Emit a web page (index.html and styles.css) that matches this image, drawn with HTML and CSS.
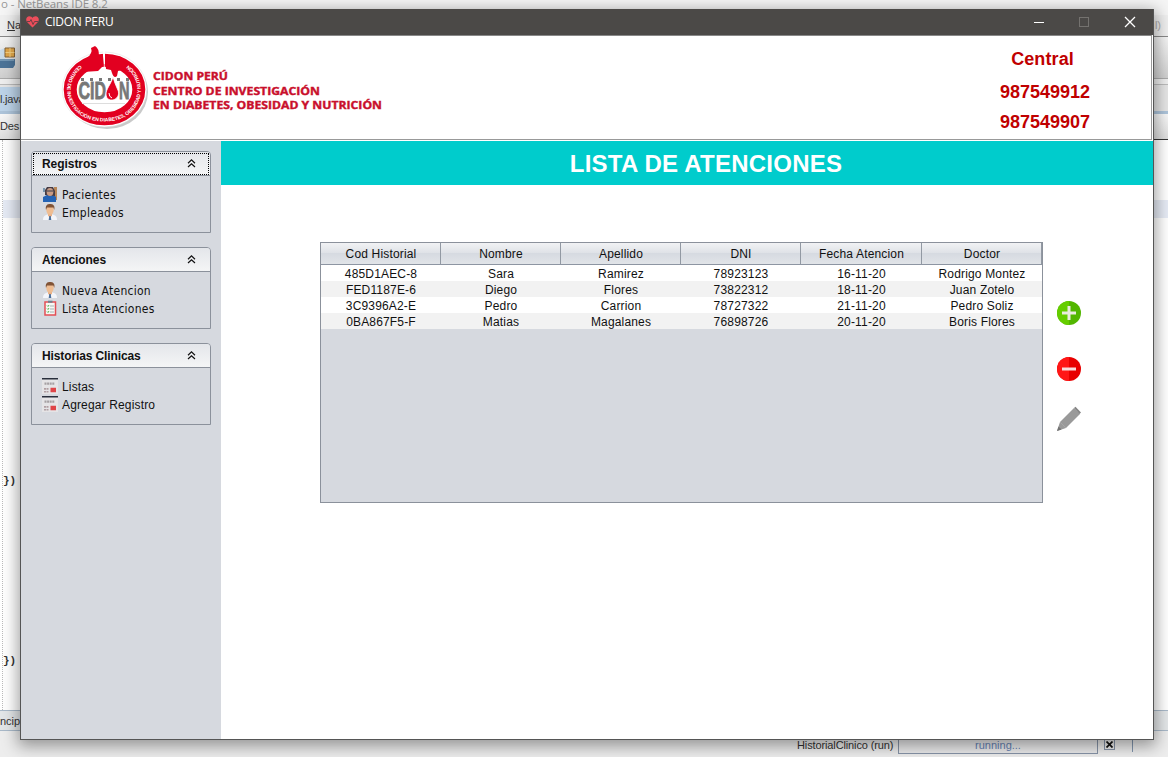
FILE: index.html
```
<!DOCTYPE html>
<html lang="es">
<head>
<meta charset="utf-8">
<title>CIDON PERU</title>
<link rel="stylesheet" href="styles.css">
</head>
<body>
<svg class="defs" width="0" height="0">
  <defs>
    <symbol id="chev" viewBox="0 0 9 9"><path d="M1 4.2 4.5 .9 8 4.2M1 8 4.5 4.7 8 8" fill="none" stroke="#111" stroke-width="1.2"/></symbol>
    <symbol id="doctor" viewBox="0 0 16 16"><path d="M1 16c0-4 2-5 5-5.5h4c3 .5 5 1.500 5 5.500z" fill="#f3f5fa"/><path d="M6 9h4v2.500L8 14l-2-2.500z" fill="#e9b187"/><path d="M7.300 12h1.400l.6 4H6.700z" fill="#4b6f9b"/><ellipse cx="8" cy="6" rx="3.700" ry="4.800" fill="#efbd92"/><path d="M4 6C3 1 5.500 0 8 0s5.500 1 4.200 6l-.8-2.500H5z" fill="#815335"/></symbol>
    <symbol id="patient" viewBox="0 0 16 16"><path d="M12 1h3v13h-3z" fill="#b98757"/><path d="M1 16V11l4-2h6l3 2v5z" fill="#2463b4"/><path d="M3 9V4l2-3h6l2 4v5z" fill="#453b43"/><ellipse cx="8" cy="6" rx="3.300" ry="4" fill="#c99c84"/><path d="M5 5h6" stroke="#353a4b"/><path d="M1 2h2v4H1z" fill="#7896ad"/><path d="M1 16v-4l4-2 3 2 3-2 3 2v4z" fill="#2463b4"/></symbol>
    <symbol id="clip" viewBox="0 0 16 16"><rect x="3" y="2" width="10.500" height="13" fill="#f5f8f4" stroke="#e34f55" stroke-width="1.500"/><path d="M6 .7h4.500v2H6z" fill="#6c8290"/><path d="M5 5.500l1 1 1-1.500M5 8.500l1 1 1-1.500M5 11.500l1 1 1-1.500" fill="none" stroke="#55b653"/><path d="M8 6h4M8 9h4M8 12h4" stroke="#a6b3b7"/></symbol>
    <symbol id="record" viewBox="0 0 16 14" preserveAspectRatio="none"><path d="M0 0h16v14H0z" fill="#e5e4e6"/><path d="M0 0h16v1.400H0z" fill="#292f3c"/><path d="M2.500 5h10" stroke="#a5a0a3" stroke-width="2" stroke-dasharray="2 .6"/><path d="M2 9.500h5M2 12h5" stroke="#b09ea2" stroke-width="1.400" stroke-dasharray="2 .5"/><path d="M8.500 8.500h5.500v4H8.500z" fill="#df4548"/></symbol>
  </defs>
</svg>
<div class="desktop">
  <div class="ide-title">o - NetBeans IDE 8.2</div>
  <div class="ide-menu"><span><u>N</u>a</span><span class="ide-search">l)</span></div>
  <div class="ide-tools"><svg width="16" height="24" viewBox="0 0 16 24"><path d="M0 3l5-2v12H0z" fill="#c9dbe9"/><path d="M5 1h9.500v9H5z" fill="#e0a64a" stroke="#826239"/><path d="M5.500 5.500h9M10 1v9" stroke="#f2cf82"/><path d="M0 12h15v6l-2 3H0z" fill="#4c7498"/><path d="M0 13h14" stroke="#9dbbd2"/></svg></div>
  <div class="ide-gap"></div>
  <div class="ide-tabs"><span>l.java</span></div>
  <div class="ide-design">Des</div>
  <div class="ide-code"><div class="code-highlight"></div><div class="code-one">})</div><div class="code-two">})</div></div>
  <div class="ide-crumb">ncip</div>
  <div class="ide-status"><span>HistorialClinico (run)</span><div class="progress">running...</div><div class="stop"><svg width="7" height="7"><path d="M.5.5l6 6m0-6-6 6" stroke="#111" stroke-width="1.700"/></svg></div><i></i></div>
</div>
<main class="window">
  <div class="titlebar">
    <svg class="heart" width="13" height="12" viewBox="0 0 13 12"><path d="M6.500 11.500 1 6C-1 3 1 .3 3.300.3 5 .3 6 1 6.500 2 7 1 8 .3 9.700.3 12 .3 14 3 12 6z" fill="#ed4e5b"/><path d="M1 5.500h3l1-2 2 5 1.500-3H12" fill="none" stroke="#713e45"/></svg>
    <span>CIDON PERU</span>
    <svg class="controls" width="104" height="12" viewBox="0 0 104 12"><path d="M0 6.500h10" stroke="#fff"/><rect x="45.500" y="1.500" width="9" height="9" fill="none" stroke="#74726f"/><path d="M91 1l10 10m0-10L91 11" stroke="#fff" stroke-width="1.300"/></svg>
  </div>
  <header class="header">
    <svg class="logo" width="110" height="103" viewBox="0 0 110 103">
      <defs><path id="ring" d="M30 29C7 46 15 85.500 54 85.500S101 46 78 29"/></defs>
      <ellipse cx="57" cy="56" rx="41" ry="37" fill="#c9c9c9"/><ellipse cx="54.500" cy="53.500" rx="42.300" ry="37.500" fill="#fff" stroke="#ddd" stroke-width=".5"/>
      <ellipse cx="54.500" cy="53.500" rx="34.300" ry="29.300" fill="#fff" stroke="#e20020" stroke-width="13"/>
      <path d="M53 9l2-1v20h-2z" fill="#fff"/>
      <path d="M29 28L37 22Q43 17 41 12L45 10Q49 12 49 20L53 20 54 29 48 35 33 36z" fill="#e20020"/>
      <path d="M55 22L61 19 71 21 81 31 68 35 67 40Q64 43 62 37L61 34 56 33z" fill="#e20020"/>
      <path d="M54.300 19v13" stroke="#fff" stroke-width=".8"/>
      <path d="M31 43.500h48" stroke="#777" stroke-width="3" stroke-dasharray="3 6"/>
      <g class="logo-word"><text x="28.500" y="62.500" textLength="27.500" lengthAdjust="spacingAndGlyphs">CID</text><text x="69" y="62.500" textLength="10.500" lengthAdjust="spacingAndGlyphs">N</text></g>
      <path d="M63 41Q65 48 67 52C74 64 56 69 56 58 56 53 61 48 63 41z" fill="#e20020" stroke="#fff" stroke-width=".8"/><path d="M59 57q0 4 3 5" fill="none" stroke="#fff"/><path d="M32 67.500h43" stroke="#ddd"/>
      <text class="ring-text"><textPath href="#ring" textLength="166">CENTRO DE INVESTIGACIÓN EN DIABETES, OBESIDAD Y NUTRICIÓN</textPath></text>
    </svg>
    <svg class="brand" width="240" height="45" viewBox="0 0 240 45"><text x="2" y="12" textLength="75" lengthAdjust="spacingAndGlyphs">CIDON PERÚ</text><text x="2" y="26.500" textLength="167" lengthAdjust="spacingAndGlyphs">CENTRO DE INVESTIGACIÓN</text><text x="2" y="41" textLength="229" lengthAdjust="spacingAndGlyphs">EN DIABETES, OBESIDAD Y NUTRICIÓN</text></svg>
    <div class="phones"><b class="central">Central</b><b>987549912</b><b>987549907</b></div>
  </header>
  <div class="workspace">
    <aside class="sidebar">
      <section class="panel focused"><h2>Registros<svg><use href="#chev"/></svg></h2><ul class="people"><li><svg><use href="#patient"/></svg><span>Pacientes</span></li><li><svg><use href="#doctor"/></svg><span>Empleados</span></li></ul></section>
      <section class="panel"><h2>Atenciones<svg><use href="#chev"/></svg></h2><ul class="people"><li><svg><use href="#doctor"/></svg><span>Nueva Atencion</span></li><li><svg><use href="#clip"/></svg><span>Lista Atenciones</span></li></ul></section>
      <section class="panel"><h2 class="tight">Historias Clinicas<svg><use href="#chev"/></svg></h2><ul><li><svg><use href="#record"/></svg><span>Listas</span></li><li><svg><use href="#record"/></svg><span>Agregar Registro</span></li></ul></section>
    </aside>
    <section class="content">
      <h1>LISTA DE ATENCIONES</h1>
      <div class="list-area">
        <div class="table-box"><table>
          <colgroup><col><col><col><col><col class="wide"><col></colgroup>
          <thead><tr><th>Cod Historial</th><th>Nombre</th><th>Apellido</th><th>DNI</th><th>Fecha Atencion</th><th>Doctor</th></tr></thead>
          <tbody>
            <tr><td>485D1AEC-8</td><td>Sara</td><td>Ramirez</td><td>78923123</td><td>16-11-20</td><td>Rodrigo Montez</td></tr>
            <tr><td>FED1187E-6</td><td>Diego</td><td>Flores</td><td>73822312</td><td>18-11-20</td><td>Juan Zotelo</td></tr>
            <tr><td>3C9396A2-E</td><td>Pedro</td><td>Carrion</td><td>78727322</td><td>21-11-20</td><td>Pedro Soliz</td></tr>
            <tr><td>0BA867F5-F</td><td>Matias</td><td>Magalanes</td><td>76898726</td><td>20-11-20</td><td>Boris Flores</td></tr>
          </tbody>
        </table></div>
        <div class="actions">
          <svg viewBox="0 0 24 24"><circle cx="12" cy="12" r="12" fill="#52b600"/><path d="M12 0a12 12 0 0 0 0 24z" fill="#65cd00"/><path d="M5 12h14M12 5v14" stroke="#e9ecdf" stroke-width="3"/></svg>
          <svg viewBox="0 0 24 24"><circle cx="12" cy="12" r="12" fill="#e80000"/><path d="M12 0a12 12 0 0 0 0 24z" fill="#ff1717"/><path d="M5 12h14" stroke="#f7dede" stroke-width="3"/></svg>
          <svg class="pencil" viewBox="0 0 24 24"><path d="M0 24L3 15 17 1l6 6L9 21z" fill="#999"/><path d="M17 1l1.500-1.200L24 5.500 22.500 7z" fill="#858585"/><path d="M0 24l1.500-4.500 3 3z" fill="#737373"/><path d="M3 15l6 6" stroke="#b0b0b0" stroke-width=".6"/></svg>
        </div>
      </div>
    </section>
  </div>
</main>
</body>
</html>
```

FILE: styles.css
```
* { box-sizing: border-box; }
body { margin: 0; width: 1168px; height: 757px; overflow: hidden; font: 12px "Liberation Sans", Arial, sans-serif; color: #111; }
.defs { position: absolute; }
.desktop { display: flex; flex-direction: column; width: 1168px; height: 757px; background: #fff; color: #333; }
.ide-title { height: 15px; font: 11.5px/7px "Open Sans", sans-serif; color: #999; padding-left: 1px; letter-spacing: -.1px; background: #f5f5f5; }
.ide-menu { height: 21px; display: flex; justify-content: space-between; align-items: center; background: #efefef; padding: 0 7px 2px 7px; font-size: 11px; }
.ide-search { color: #aaa; }
.ide-tools { height: 43px; padding-top: 10px; border-top: 1px solid #888; border-bottom: 1px solid #aaa; background: linear-gradient(#f4f4f4, #cfcfcf); }
.ide-gap { height: 5px; background: #eee; }
.ide-tabs { height: 30px; background: #e5e5e5; border-top: 1px solid #bbb; border-bottom: 3px solid #adc4da; display: flex; align-items: end; }
.ide-tabs span { background: #bdd4e9; height: 24px; line-height: 24px; width: 21px; white-space: nowrap; font-size: 11px; letter-spacing: -.2px; }
.ide-design { height: 26px; padding: 6px 0; font-size: 11px; letter-spacing: -.2px; background: linear-gradient(#f8f8f8, #ddd); border-bottom: 1px solid #333; }
.ide-code { height: 570px; margin-left: 2px; border-left: 1px dotted #bbb; font-family: "Liberation Mono", monospace; font-size: 11px; font-weight: bold; padding-top: 60px; }
.code-highlight { height: 18px; background: #e6ebf5; }
.code-one { margin-top: 257px; height: 180px; }
.code-two { height: 20px; }
.ide-crumb { height: 21px; background: #e3e6e8; border-top: 1px solid #a9b9c9; border-bottom: 1px solid #a9b9c9; font-size: 11px; line-height: 20px; }
.ide-status { height: 26px; background: #ededed; display: flex; padding-left: 797px; font-size: 11px; line-height: 29px; }
.ide-status > span { width: 101px; letter-spacing: -.12px; }
.progress { width: 200px; height: 23px; border: 1px solid #8794a8; text-align: center; color: #6683b4; line-height: 27px; background: #ebebec; }
.stop { width: 11px; height: 11px; border: 1px solid #8794a8; margin: 8px 0 0 6px; display: flex; align-items: center; justify-content: center; }
.ide-status i { border-left: 1px solid #8296af; height: 21px; margin-left: 17px; }

.window { position: absolute; left: 20px; top: 9px; width: 1134px; height: 731px; background: #fff; border: 1px solid #555; border-top: 0; box-shadow: 0 4px 15px 2px rgba(0,0,0,.38); display: flex; flex-direction: column; }
.titlebar { height: 26px; flex: none; background: #4b4947; display: flex; align-items: center; color: #fff; font: 12px "Open Sans", sans-serif; padding: 0 15px 0 5px; }
.titlebar span { margin-left: 6px; letter-spacing: -.28px; padding-bottom: 1px; }
.controls { margin-left: auto; }
.header { height: 105px; flex: none; border-top: 1px solid #888; border-bottom: 1px solid #999; border-right: 1px solid #999; margin-right: 1px; display: flex; background: #fff; }
.logo { margin-left: 29px; flex: none; }
.logo-word { fill: #777; font: bold 23px "Liberation Sans", sans-serif; stroke: #777; stroke-width: .8px; }
.ring-text { font: bold 5px "Liberation Sans", sans-serif; fill: #fff; }
.brand { margin: 32px 0 0 -9px; font: bold 11px "Open Sans", sans-serif; fill: #c90f2c; flex: none; stroke: #c90f2c; stroke-width: .4px; }
.phones { width: 110px; margin-left: auto; margin-right: 51px; display: flex; flex-direction: column; align-items: center; color: #c00000; font-size: 18px; line-height: 30px; padding-top: 8px; }
.phones .central { margin: 0 5px 3px 0; letter-spacing: .1px; }
.workspace { display: flex; flex: 1; margin-top: 1px; }
.sidebar { width: 200px; background: #d6d9df; padding: 10px; display: flex; flex-direction: column; gap: 14px; flex: none; }
.panel { height: 82px; border: 1px solid #8b919b; border-radius: 4px 4px 0 0; overflow: hidden; }
.panel h2 { margin: 0; height: 24px; padding: 0 14px 0 10px; display: flex; align-items: center; justify-content: space-between; border-bottom: 1px solid #8b919b; background: linear-gradient(#e4e6ea, #f4f5f6); font-size: 12px; letter-spacing: -.06px; }
.focused h2 { outline: 1px dotted #000; outline-offset: -2px; }
.panel .tight { letter-spacing: -.12px; }
.panel h2 svg { width: 9px; height: 9px; }
.panel ul { list-style: none; margin: 0; padding: 9px 0 0 10px; }
.panel li { display: flex; align-items: center; height: 18px; gap: 4px; white-space: nowrap; }
.panel li svg { width: 16px; height: 16px; }
.panel li span { font-size: 12px; letter-spacing: .15px; padding-top: 2px; }
.panel .people span { font-family: "DejaVu Sans Condensed", "DejaVu Sans", sans-serif; font-stretch: condensed; letter-spacing: .26px; }
.content { flex: 1; }
.content h1 { margin: 0; height: 44px; background: #00cccc; color: #fff; font-size: 24px; line-height: 45px; text-align: center; padding-left: 38px; letter-spacing: .23px; }
.list-area { display: flex; padding: 57px 72px 0 99px; justify-content: space-between; }
.table-box { width: 723px; height: 261px; border: 1px solid #8b919b; background: #d6d9df; }
table { table-layout: fixed; border-collapse: separate; border-spacing: 0; width: 721px; }
col { width: 120px; }
.wide { width: 121px; }
th, td { padding: 0 0 0 1px; text-align: center; font-weight: normal; letter-spacing: .17px; white-space: nowrap; }
th { height: 22px; border-right: 1px solid #9299a3; border-bottom: 1px solid #8d95a2; background: linear-gradient(#f1f2f4 0, #dfe2e7 47%, #d6dae1 50%, #e1e4e8); }
td { height: 16px; line-height: 14px; padding: 2px 0 0; }
tbody tr { background: #fff; }
tbody tr:nth-child(even) { background: #f2f2f2; }
.actions { width: 24px; display: flex; flex-direction: column; padding-top: 59px; }
.actions svg { width: 24px; height: 24px; margin-bottom: 32px; overflow: visible; }
.actions .pencil { margin-top: -6px; }
```
